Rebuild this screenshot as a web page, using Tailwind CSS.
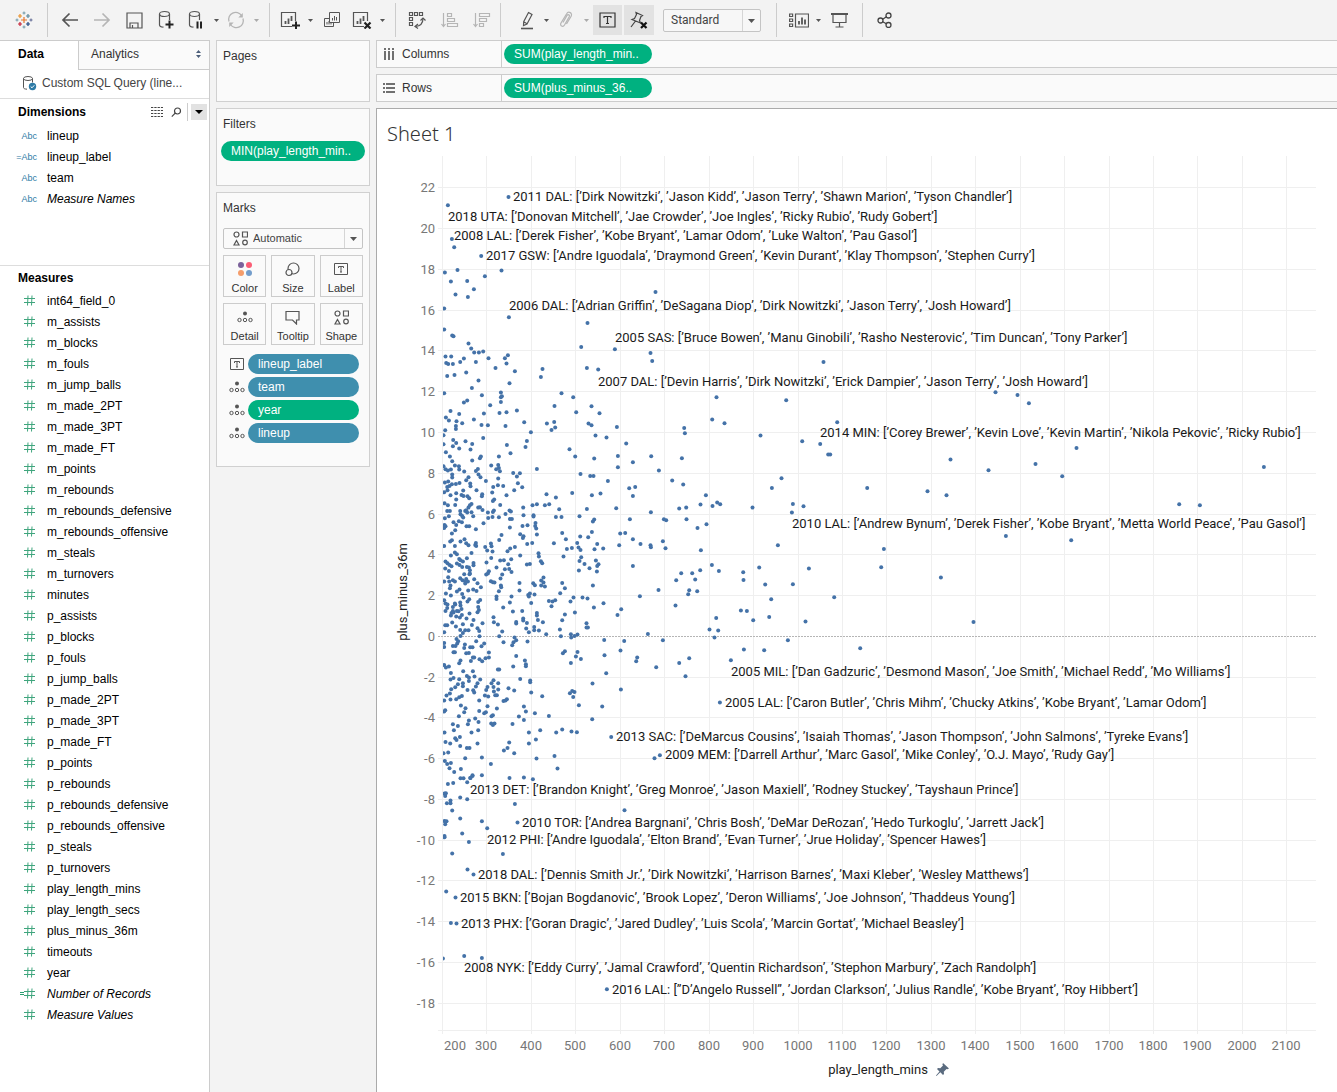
<!DOCTYPE html>
<html lang="en">
<head>
<meta charset="utf-8">
<meta name="viewport" content="width=device-width, initial-scale=1">
<title>Sheet 1</title>
<script src="https://cdn.jsdelivr.net/npm/@tailwindcss/browser@4"></script>
</head>
<body class="flex min-h-screen flex-col overflow-x-hidden bg-[#f3f3f3] font-['Liberation_Sans',Arial,sans-serif] text-xs text-[#333]">

<!-- Toolbar -->
<header class="flex h-10 shrink-0 items-center text-[#555]" role="toolbar" aria-label="Workbook toolbar">
  <button aria-label="Tableau" class="flex w-[47px] items-center justify-center">
    <svg width="18" height="18" viewBox="0 0 18 18" fill="none" stroke-width="1.2">
      <path stroke="#e8762c" d="M9 6v6M6 9h6"/><path stroke="#eb9129" d="M5 3v4M3 5h4"/><path stroke="#59879b" d="M13 3v4M11 5h4"/><path stroke="#c72035" d="M5 11v4M3 13h4"/><path stroke="#1f457e" d="M13 11v4M11 13h4"/>
      <path stroke="#7199a6" stroke-width="1" d="M9 .5v3M7.500 2h3M2 7.500v3M.5 9h3M9 14.500v3M7.500 16h3"/><path stroke="#5b6591" stroke-width="1" d="M16 7.500v3M14.500 9h3"/>
    </svg>
  </button>
  <span class="h-[34px] w-px bg-[#ccc]"></span>
  <button aria-label="Undo" class="ml-1.5 flex w-8 justify-center"><svg width="18" height="16" fill="none" stroke="#555" stroke-width="1.700"><path d="M17 8H2M8.500 1.500 2 8l6.500 6.500"/></svg></button>
  <button aria-label="Redo" class="flex w-8 justify-center"><svg width="18" height="16" fill="none" stroke="#b5b5b5" stroke-width="1.700"><path d="M1 8h15M9.500 1.500 16 8l-6.500 6.500"/></svg></button>
  <button aria-label="Save" class="flex w-8 justify-center"><svg width="17" height="17" fill="none" stroke="#555" stroke-width="1.2"><path d="M1 1h15v15H1zM4 16v-5h8v5M6.500 16v-3"/></svg></button>
  <button aria-label="New data source" class="flex w-8 justify-center"><svg width="18" height="20" fill="none" stroke="#555" stroke-width="1.2"><ellipse cx="7.500" cy="4" rx="5" ry="2.500"/><path d="M2.500 4v11c0 1.200 1.500 2 4 2.200M12.500 4v6"/><path stroke="#222" stroke-width="2" d="M12.500 10.500v8M8.500 14.500h8"/></svg></button>
  <button aria-label="Pause auto updates" class="flex w-7 justify-center"><svg width="16" height="20" fill="none" stroke="#555" stroke-width="1.2"><ellipse cx="6.500" cy="4" rx="5" ry="2.500"/><path d="M1.500 4v11c0 1.200 1.500 2 4 2.200M11.500 4v6"/><path stroke="#222" stroke-width="2" d="M9.500 11.500v7M13 11.500v7"/></svg></button>
  <button aria-label="Auto update options" class="flex w-3 justify-center"><svg width="5" height="3"><path fill="#555" d="M0 0h5L2.500 3z"/></svg></button>
  <button aria-label="Refresh" class="flex w-7 justify-center"><svg width="18" height="18" fill="none" stroke="#b5b5b5" stroke-width="1.300"><path d="M2 10.500A7 7 0 0 1 14.500 4.500M16 7.500A7 7 0 0 1 3.500 13.500"/><path fill="#b5b5b5" stroke="none" d="M15.800 2v4.500h-4.500zM2.200 16v-4.500h4.500z"/></svg></button>
  <button aria-label="Refresh options" class="flex w-3 justify-center"><svg width="5" height="3"><path fill="#aaa" d="M0 0h5L2.500 3z"/></svg></button>
  <span class="ml-[7px] h-[34px] w-px bg-[#ccc]"></span>
  <button aria-label="New worksheet" class="ml-1.5 flex w-7 justify-center"><svg width="20" height="18" fill="none" stroke="#555" stroke-width="1.200"><path d="M12 15.500H1.500V1.500h14V10"/><path stroke-width="1.800" d="M5.500 13v-3M8.500 13V7.500M11.500 10V5"/><path stroke="#222" stroke-width="2" d="M16 10.500v8M12 14.500h8"/></svg></button>
  <button aria-label="New worksheet options" class="flex w-3 justify-center"><svg width="5" height="3"><path fill="#555" d="M0 0h5L2.500 3z"/></svg></button>
  <button aria-label="Duplicate" class="flex w-8 justify-center"><svg width="18" height="18" fill="none" stroke="#555"><path d="M6.500 1.500h10v10h-10zM6.500 7.500h-5v8h9v-4"/><path d="M9.500 9.500V7M11.500 9.500V5M13.500 9.500V6M4 13.500V11M6 13.500V10M8 13.500V12"/></svg></button>
  <button aria-label="Clear sheet" class="flex w-7 justify-center"><svg width="20" height="18" fill="none" stroke="#555" stroke-width="1.200"><path d="M12 15.500H1.500V1.500h14V10"/><path stroke-width="1.800" d="M5.500 13v-3M8.500 13V7.500M11.500 10V5"/><path stroke="#222" stroke-width="2.200" d="m12.500 11.500 6 6M18.500 11.500l-6 6"/></svg></button>
  <button aria-label="Clear options" class="flex w-3 justify-center"><svg width="5" height="3"><path fill="#555" d="M0 0h5L2.500 3z"/></svg></button>
  <span class="ml-[7px] h-[34px] w-px bg-[#ccc]"></span>
  <button aria-label="Swap rows and columns" class="ml-1 flex w-[34px] justify-center"><svg width="18" height="18" fill="none" stroke="#555" stroke-width="1.200"><path d="M1.500 1.500h3v3h-3zM6.500 1.500h3v3h-3zM11.500 1.500h3v3h-3zM1.500 6.500h3v3h-3zM1.500 11.500h3v3h-3zM15 7.500c0 5-2.500 7.500-7.500 8"/><path d="M12.500 9.500 15 7l2.500 2.500M10 13l-3 2.500 3 2"/></svg></button>
  <button aria-label="Sort ascending" class="flex w-8 justify-center"><svg width="18" height="17" fill="none" stroke="#b5b5b5" stroke-width="1.200"><path d="M2.500 1v13M.5 12l2 2.500 2-2.500M6.500 1.500h4v3h-4zM6.500 6.500h7v3h-7zM6.500 11.500h10v3h-10z"/></svg></button>
  <button aria-label="Sort descending" class="flex w-8 justify-center"><svg width="18" height="17" fill="none" stroke="#b5b5b5" stroke-width="1.200"><path d="M2.500 1v13M.5 12l2 2.500 2-2.500M6.500 1.500h10v3h-10zM6.500 6.500h7v3h-7zM6.500 11.500h4v3h-4z"/></svg></button>
  <span class="ml-0.5 h-[34px] w-px bg-[#ccc]"></span>
  <button aria-label="Highlight" class="ml-[13px] flex w-[26px] justify-center"><svg width="14" height="19" fill="none" stroke="#555" stroke-width="1.200"><path d="m8.500 1.500 3.500 2-5 9.500-3.500 1.500.2-3.800zM3.700 10.700l3.300 2"/><path stroke-width="1.600" d="M1 17.500h12"/></svg></button>
  <button aria-label="Highlight options" class="flex w-3 justify-center"><svg width="5" height="3"><path fill="#555" d="M0 0h5L2.500 3z"/></svg></button>
  <button aria-label="Group" class="flex w-7 justify-center"><svg width="14" height="18" fill="none" stroke="#b5b5b5" stroke-width="1.200"><path d="m4 11.500 4-7c1-1.500 3-.5 2.200 1.200l-4.700 8.300c-1.500 2.500-5 .8-3.500-2L7.500 3c2-3.500 6.500-1 4.500 2.500L7.500 13"/></svg></button>
  <button aria-label="Group options" class="flex w-3 justify-center"><svg width="5" height="3"><path fill="#aaa" d="M0 0h5L2.500 3z"/></svg></button>
  <button aria-label="Show mark labels" aria-pressed="true" class="ml-px flex h-[30px] w-[29px] items-center justify-center bg-[#e2e2e2]"><svg width="17" height="16" fill="none" stroke="#333" stroke-width="1.200"><path d="M1 1h15v14H1z"/><path d="M5 6V4.500h7V6M8.500 4.500v7M7 11.500h3"/></svg></button>
  <button aria-label="Fix axes" aria-pressed="true" class="ml-0.5 flex h-[30px] w-[30px] items-center justify-center bg-[#e2e2e2]"><svg width="20" height="18" fill="none" stroke="#444" stroke-width="1.200"><path d="m7 1.500 6.500 3-1.500 1-1.500 4 1 2.500L3 8.500l2.500-1L7.500 3.500zM6.500 10l-4.500 6"/><path stroke="#111" stroke-width="2.200" d="m12 11.500 5.500 5.500M17.500 11.500 12 17"/></svg></button>
  <span class="relative ml-[9px] w-[98px]">
    <select aria-label="Fit" class="h-[23px] w-full appearance-none rounded-xs border border-[#c4c4c4] bg-[#f7f7f7] pl-[7px] font-['Roboto',sans-serif] text-xs text-[#444]"><option>Standard</option></select>
    <svg class="pointer-events-none absolute top-px right-px" width="18" height="21"><path stroke="#d5d5d5" d="M.5 0v21"/><path fill="#555" d="M6 9h7l-3.500 4z"/></svg>
  </span>
  <span class="ml-[15px] h-[34px] w-px bg-[#ccc]"></span>
  <button aria-label="Show cards" class="ml-[9px] flex w-[26px] justify-center"><svg width="20" height="15" fill="none" stroke="#555" stroke-width="1.200"><path d="M.6 1h3v2.500h-3zM.6 6h3v2.500h-3zM.6 11h3v2.500h-3zM6.500 1h13v13h-13z"/><path stroke-width="1.800" d="M10 11.500V8M13 11.500v-7M16 11.500v-5"/></svg></button>
  <button aria-label="Card options" class="flex w-3 justify-center"><svg width="5" height="3"><path fill="#555" d="M0 0h5L2.500 3z"/></svg></button>
  <button aria-label="Presentation mode" class="flex w-[30px] justify-center"><svg width="17" height="16" fill="none" stroke="#555" stroke-width="1.200"><path stroke-width="2" d="M0 2h17"/><path d="M2 2v8.500h13V2M8.500 10.500v4M4.500 15h8"/></svg></button>
  <span class="ml-2 h-[34px] w-px bg-[#ccc]"></span>
  <button aria-label="Share" class="ml-1.5 flex w-8 justify-center"><svg width="16" height="16" fill="none" stroke="#444" stroke-width="1.300"><circle cx="3.500" cy="8.500" r="2.500"/><circle cx="11.500" cy="3.500" r="2.500"/><circle cx="11.500" cy="13" r="2.500"/><path d="m5.700 7.200 3.700-2.400M5.700 9.800l3.700 2"/></svg></button>
</header>

<main class="flex flex-1 items-stretch">

  <!-- Data pane -->
  <aside class="w-[210px] shrink-0 border-r border-[#ccc] bg-white text-black">
    <div class="flex h-[30px]" role="tablist">
      <button role="tab" aria-selected="true" class="w-[78px] border-t border-[#ccc] pb-1 pl-[18px] text-left font-bold">Data</button>
      <button role="tab" class="flex flex-1 items-center justify-between border-t border-b border-l border-[#ccc] bg-[#fafafa] pr-2 pb-0.5 pl-3 text-[#333]">Analytics
        <svg width="5" height="8" fill="#4c5f7a"><path d="M0 3h5L2.500 0zM0 5h5L2.500 8z"/></svg></button>
    </div>
    <a href="#" class="flex h-[29px] items-center gap-[5px] border-b border-[#ddd] pb-0.5 pl-[22px] text-[#444]">
      <svg width="15" height="16" fill="none" stroke="#555"><ellipse cx="6" cy="3.500" rx="4.500" ry="2"/><path d="M1.500 3.500v9c0 1 1 1.500 3.500 1.700M10.500 3.500v4"/><circle cx="10.500" cy="11.500" r="3.700" fill="#2e7ba6" stroke="none"/><path stroke="#fff" d="m8.700 11.500 1.300 1.300 2.300-2.500"/></svg>
      Custom SQL Query (line...
    </a>
    <section class="h-[167px] border-b border-[#ddd]">
      <div class="flex h-[26px] items-center pr-0.5 pl-[18px]">
        <h2 class="flex-1 font-bold">Dimensions</h2>
        <button aria-label="View data"><svg width="12" height="10" stroke="#444" fill="none" stroke-dasharray="2.300 1"><path d="M0 .5h12M0 3.500h12M0 6.500h12M0 9.500h12"/></svg></button>
        <button aria-label="Find field" class="ml-2"><svg width="11" height="11" fill="none" stroke="#444" stroke-width="1.200"><circle cx="6.500" cy="4" r="3"/><path d="M4.200 6.200.8 9.600"/></svg></button>
        <span class="ml-[5px] h-[18px] w-px bg-[#ccc]"></span>
        <button aria-label="Dimension menu" class="ml-[3px] flex h-4 w-4 items-center justify-center bg-[#e2e2e2]"><svg width="8" height="4"><path d="M0 0h8L4 4z"/></svg></button>
      </div>
      <ul id="dimensions"></ul>
    </section>
    <section>
      <h2 class="flex h-6 items-center pl-[18px] font-bold">Measures</h2>
      <ul id="measures"></ul>
    </section>
  </aside>

  <!-- Cards -->
  <div class="ml-1.5 flex w-[154px] shrink-0 flex-col gap-1.5">
    <section class="h-[62px] border border-[#d0d0d0] bg-[#fafafa] px-1.5 pt-[7px]"><h2>Pages</h2></section>
    <section class="h-[78px] border border-[#d0d0d0] bg-[#fafafa] px-1 pt-[7px]"><h2 class="px-0.5">Filters</h2>
      <button class="mt-[9px] h-5 w-36 rounded-full bg-[#00b180] pl-[10px] text-left text-white">MIN(play_length_min..</button>
    </section>
    <section class="h-[275px] border border-[#d0d0d0] bg-[#fafafa] px-1.5 pt-[7px]"><h2>Marks</h2>
      <div class="relative mt-3 w-[140px]">
        <select aria-label="Mark type" class="h-[21px] w-full appearance-none rounded-xs border border-[#c4c4c4] bg-[#fafafa] pl-[29px] text-[11px] text-[#444]"><option>Automatic</option></select>
        <svg class="pointer-events-none absolute top-[3px] left-[10px]" width="15" height="15" fill="none" stroke="#555" stroke-width="1.200"><circle cx="3.500" cy="3.500" r="2.500"/><path d="M9.500 1h5v5h-5zM3.500 9.500 6 14H1z"/><circle cx="12" cy="11.500" r="2.300"/></svg>
        <svg class="pointer-events-none absolute top-px right-px" width="18" height="19"><path stroke="#d5d5d5" d="M.5 0v19"/><path fill="#555" d="M6 8h7l-3.500 4z"/></svg>
      </div>
      <div id="encodings" class="mt-1.5 grid w-[140px] grid-cols-3 gap-x-[5px] gap-y-1.5 text-[11px]"></div>
      <ul id="marks" class="mt-[9px] flex flex-col gap-[3px]"></ul>
    </section>
  </div>

  <!-- Shelves and view -->
  <div class="ml-1.5 flex min-w-0 flex-1 flex-col gap-1.5">
    <div class="flex h-7 items-center border border-r-0 border-[#ccc] bg-[#fafafa]">
      <h2 class="flex h-full w-[125px] items-center gap-2 border-r border-[#ccc] pl-1.5"><svg width="11" height="12" fill="none" stroke="#444" stroke-width="1.500"><path stroke-dasharray="2 1 12" d="M2 0v12M6 0v12M10 0v12"/></svg>Columns</h2>
      <button class="ml-[2px] h-5 w-[148px] rounded-full bg-[#00b180] pl-[10px] text-left text-white">SUM(play_length_min..</button>
    </div>
    <div class="flex h-7 items-center border border-r-0 border-[#ccc] bg-[#fafafa]">
      <h2 class="flex h-full w-[125px] items-center gap-[7px] border-r border-[#ccc] pl-1.5"><svg width="12" height="11" fill="none" stroke="#444" stroke-width="1.500"><path stroke-dasharray="2 1 12" d="M0 1h12M0 5h12M0 9h12"/></svg>Rows</h2>
      <button class="ml-[2px] h-5 w-[148px] rounded-full bg-[#00b180] pl-[10px] text-left text-white">SUM(plus_minus_36..</button>
    </div>
    <section class="flex-1 overflow-hidden border-t border-l border-[#aaa] bg-white">
      <h1 class="h-[47px] pt-[11px] pl-2.5 font-['Noto_Sans',sans-serif] text-xl font-light text-[#333]">Sheet 1</h1>
      <svg id="chart" role="img" aria-label="plus_minus_36m against play_length_mins by lineup" width="960" height="936" viewBox="377 156 960 936" class="font-['Roboto',sans-serif] text-[13px]"></svg>
    </section>
  </div>
</main>

<script>
const el = id => document.getElementById(id);

// Data pane fields
const row = (icon, name, italic) => `<li class="flex h-[21px] items-center"><span class="flex w-[47px] justify-end pr-[10px] text-[9px] text-[#2e7ba6]">${icon}</span><span class="${italic ? 'italic' : ''}">${name}</span></li>`;
const hash = calc => `<span class="flex items-center pr-[2px]">${calc ? '<svg width="4" height="5" stroke="#2a9d6f"><path d="M0 1.500h4M0 3.500h4"/></svg>' : ''}<svg width="11" height="11" fill="none" stroke="#3fa57d"><path d="M4 .5 3.500 10.500M8 .5 7.500 10.500M0 3.500h11M0 7.500h11"/></svg></span>`;
el('dimensions').innerHTML = [['Abc', 'lineup'], ['=Abc', 'lineup_label'], ['Abc', 'team'], ['Abc', 'Measure Names', 1]].map(f => row(...f)).join('');
el('measures').innerHTML = `int64_field_0 m_assists m_blocks m_fouls m_jump_balls m_made_2PT m_made_3PT m_made_FT m_points m_rebounds m_rebounds_defensive m_rebounds_offensive m_steals m_turnovers minutes p_assists p_blocks p_fouls p_jump_balls p_made_2PT p_made_3PT p_made_FT p_points p_rebounds p_rebounds_defensive p_rebounds_offensive p_steals p_turnovers play_length_mins play_length_secs plus_minus_36m timeouts year`
  .split(' ').map(n => row(hash(), n)).join('') + row(hash(1), 'Number of Records', 1) + row(hash(), 'Measure Values', 1);

// Marks card
const dots = '<svg width="16" height="12" fill="none" stroke="#555"><circle cx="8" cy="2.500" r="2" fill="#555" stroke="none"/><circle cx="2.500" cy="9" r="1.700"/><circle cx="8" cy="9" r="1.700"/><circle cx="13.500" cy="9" r="1.700"/></svg>';
const box = '<svg width="14" height="13" fill="none" stroke="#555"><path d="M.5.5h13v11H.5zM4.500 5V3.500h5V5M7 3.500v5.500M6 9h2"/></svg>';
const enc = {
  Color: '<svg width="16" height="16"><circle cx="4" cy="4" r="3" fill="#7b629b"/><circle cx="12" cy="4" r="3" fill="#fb5d75"/><circle cx="4" cy="12" r="3" fill="#f59d6b"/><circle cx="12" cy="12" r="3" fill="#739dcb"/></svg>',
  Size: '<svg width="15" height="15" fill="none" stroke="#555" stroke-width="1.200"><circle cx="8.500" cy="6.500" r="5.500"/><circle cx="4" cy="10.500" r="3" fill="#fafafa"/></svg>',
  Label: box, Detail: dots,
  Tooltip: '<svg width="15" height="15" fill="none" stroke="#555" stroke-width="1.200"><path d="M1 1.500h13v8.500h-2.500v4L7.500 10H1z"/></svg>',
  Shape: '<svg width="15" height="15" fill="none" stroke="#555" stroke-width="1.200"><circle cx="3.500" cy="3.500" r="2.500"/><path d="M9.500 1h5v5h-5zM3.500 9.500 6 14H1z"/><circle cx="12" cy="11.500" r="2.300"/></svg>'
};
el('encodings').innerHTML = Object.entries(enc).map(([n, s]) => `<button class="flex h-[42px] flex-col items-center border border-[#ccc] bg-[#fafafa]"><span class="flex h-[26px] items-center justify-center">${s}</span><span class="leading-[12px]">${n}</span></button>`).join('');
el('marks').innerHTML = [[box, 'lineup_label', 'bg-[#3f8fae]'], [dots, 'team', 'bg-[#3f8fae]'], [dots, 'year', 'bg-[#00b180]'], [dots, 'lineup', 'bg-[#3f8fae]']]
  .map(([i, n, c]) => `<li class="flex h-5 items-center"><span class="flex w-[25px] justify-center pl-0.5">${i}</span><button class="h-5 w-[111px] rounded-full pl-[10px] text-left text-white ${c}">${n}</button></li>`).join('');

// Chart: each tile is [x origin, y origin, points in thirds of a pixel]
const tiles = [
[390,150,`355,140 173,165 185,266 192,291 273,317 164,367 202,359 334,361 182,394 231,392 284,378 251,417 196,433 233,440 796,425 162,475 356,501 592,518 162,538 186,556 190,558 235,580 243,595 252,607 266,607 279,604 573,590 674,597 781,608 786,632 166,619 183,619 168,638 174,641 188,641 210,635 221,625 257,635 295,624 316,653 344,624 353,615 349,640 374,663 457,656 452,680 590,653 624,658 171,677 193,674 228,667 265,691 245,713 358,699`],
[390,390,`162,9 275,15 332,7 335,18 332,21 514,9 549,21 231,31 221,37 332,35 300,45 493,47 604,48 181,62 380,61 207,71 281,70 328,68 349,66 558,66 628,69 167,82 176,91 199,93 216,99 251,88 274,104 293,105 346,107 402,96 470,100 492,95 495,112 484,119 595,100 604,105 680,110 165,120 197,107 197,116 422,126 160,135 616,136 649,142 279,143 189,149 198,158 226,153 246,161 160,162 188,168 207,175 241,178 350,164 410,152 406,170 361,189 708,160 538,177 555,199 612,205 167,186 179,199 186,213 246,211 272,199 269,204 326,199 324,224 303,226 683,197 683,231 728,216 160,228 166,237 173,241 182,238 194,226 206,228 207,238 222,244 186,253 186,262 257,242 263,236 265,253 271,261 318,237 326,233 329,243 324,265 287,272 440,236 369,248 389,249 380,259 383,279 396,291 372,300 571,251 600,257 610,257 653,272 717,294 735,290 728,317 164,277 174,274 171,290 178,287 185,282 197,281 208,278 228,270 235,261 240,280 241,288 172,300 162,306 309,290 323,285 339,287 306,307 349,315 259,300 219,301 198,309 181,315 214,314 220,317 232,318 237,324 276,312 275,318 312,328 308,332 198,328 469,312 546,308 497,322 605,315 631,310 163,339 173,345 195,344 235,352 244,341 239,345 330,344 264,352 269,351 277,359 399,352 427,345 440,342 464,345 477,342 507,357 590,356 678,354 171,362 179,362 210,362 211,372 216,377 225,362 231,367 244,366 228,360 293,367 308,365 311,361 346,371 358,361 362,364 294,383 307,380 326,381 249,378 164,384 176,378 219,382 359,386 365,386 400,375 430,375 430,379 497,380 514,380 568,378 612,388 608,394 719,387 190,396 206,393 215,396 198,404 280,399 163,404 166,408 162,413 229,408 237,408 257,417 195,420 359,412 397,407 412,405 436,398 435,407 438,415 185,430 334,434 390,432 400,438 398,443 440,433 516,428 605,425 690,430 705,428 570,439 594,441 728,447 527,447 327,449 687,465 223,447 185,450 180,454 211,454 228,459 235,465 257,458 255,464 258,467 302,460 304,468 411,461 426,458 491,459 561,458 621,461 565,472 571,479 545,473 530,476 613,477 639,475 162,467 194,467 285,470 291,481 307,484 360,475 374,470 352,483 244,488 194,487 200,492 182,496 390,496 445,489 446,499 520,499 573,501 568,512 583,521 598,534 617,511 625,522 621,527 620,544 566,541 728,527 230,504 207,506 211,510 218,514 303,503 289,517 330,511 341,510 363,507 354,522 452,513 456,519 410,523 419,521 166,514 172,519 178,524 184,528 200,520 208,524 216,530 230,530 236,532 250,518 250,525 165,535 176,542 239,540 239,550 319,532 344,537 357,536 364,545 336,553 296,543 293,550 288,553 222,552 238,552 174,561 210,564 228,566 217,570 225,573 252,567 162,574 177,574 188,570 194,574 233,574 225,580 262,579 331,565 302,573 308,576 313,577 332,586 388,578 429,579 434,585 460,562 453,571 460,577 453,586 464,589 516,578 608,586 524,594 181,586 179,594 272,591 333,591`],
[390,580,`326,33 388,31 208,28 234,31 249,28 259,32 200,34 167,40 216,41 319,49 319,56 364,49 220,52 182,46 510,39 414,44 419,40 433,43 416,49 423,68 162,60 237,57 232,64 270,59 264,65 359,67 194,70 210,67 211,76 166,70 172,73 550,52 541,64 577,52 592,55 640,69 484,78 476,62 487,64 495,60 611,82 693,87 682,104 554,97 339,82 264,80 266,89 262,96 171,83 166,92 188,80 214,86 195,73 188,92 184,98 200,92 205,93 190,97 182,106 238,100 215,104 198,109 209,112 396,92 368,94 440,98 440,106 524,103 310,111 229,115 250,119 399,115 399,121 410,128 443,119 458,126 516,120 378,125 378,130 311,126 323,133 186,127 218,132 245,134 277,129 171,135 165,135 197,139 210,149 589,129 593,142 589,142 225,150 235,150 262,144 267,152 432,140 432,150 408,145 446,151 416,156 336,154 509,148 512,168 468,162 542,162 553,167 543,172 562,163 162,156 218,158 211,167 268,168 327,168 199,176 204,183 201,190 188,197 196,197 224,193 222,203 240,201 247,201 258,183 282,190 274,198 162,188 162,200 373,172 378,180 370,186 366,195 340,186 412,184 642,179 702,182 691,211 190,216 194,216 228,219 236,218 296,217 286,234 296,232 378,227 248,232 252,232 211,241 207,249 242,242 268,237 276,243 404,241 407,252 407,258 518,219 524,213 562,215 557,229 572,236 542,248 643,225 741,232 738,243 162,254 167,262 176,259 369,259 323,268 327,268 219,273 248,273 182,278 648,279 230,287 236,292 253,289 236,302 270,298 181,298 190,293 207,297 390,296 420,301 420,306 310,300 304,309 324,309 262,309 257,319 218,309 218,318 203,312 195,321 183,327 607,310 355,324 372,331 292,320 310,320 288,329 311,334 324,328 232,329 249,330 252,337 423,337 179,340 169,346 456,348 539,339 546,332 553,335 549,350 692,328 284,346 294,349 315,345 320,345 215,347 207,351 198,357 181,358 267,361 162,361 350,357 346,361 340,362 212,376 226,384 292,378 320,385 401,379 566,375 636,379 165,390 162,394 222,396 267,392 282,399 287,396 407,394 434,399 386,409 476,407 206,408 308,405 304,408 255,415 401,419 606,417 236,421 265,425 188,432 233,432 203,437 303,430 313,430 308,434 367,431 450,450 516,448 191,450 264,450 244,457 163,457 416,457 498,457 544,454 560,456 663,470 209,470 195,474 199,479 437,478 166,485 180,490 262,490 357,487 416,490 210,497 230,503 238,503 352,503 341,511 160,519 174,517 372,519 493,527 225,534 275,532 439,535 164,542 182,548 171,551 302,551 178,564 212,566 502,565 192,575 247,585 275,585 211,594 220,594 240,593 358,593 401,592 428,597`],
[390,770,`247,17 241,23 173,41 189,38 231,36 210,82 231,87 167,69 163,70 165,77 181,91 170,99 181,99 186,121 374,101 703,120 210,145 163,152 169,153 165,162 275,153 291,174 382,157 216,190 236,215 163,197 163,201 186,250 338,251 232,298 250,313 168,364 196,382 182,458 199,460 222,557 275,563 158,565 650,657`],
[620,330,`610,95 289,201 498,210 276,268 313,279 192,293 194,309 421,316 651,276 546,333 600,341 624,373 630,373 93,378 185,384 116,421 156,451 189,463 455,473 484,444 741,473 922,483 979,495 991,388 1105,420 1126,186 257,495 241,523 277,527 291,517 300,522 177,535 198,532 92,546 397,532 518,521 550,528 515,547 131,567 138,570 199,567 259,582 232,593 128,633 136,654 61,641 91,645 92,651 242,660 473,645 791,656 783,711 962,742 1157,617 275,704 240,720 296,722 183,729 216,729 168,750 225,748 369,726 370,749 417,712 566,715 115,779 207,780 204,792 231,783 435,763 518,762 59,798 453,807 642,801 166,826 362,841 380,842 399,870 447,860 288,863 556,874 1060,875 268,898 294,901 283,922 83,911 128,930 503,930 720,954 371,958 432,960`],
[1000,330,`52,194 86,219 229,353 106,401 186,438 791,410 537,522 599,525 213,630`],
[600,620,`237,128 267,114 168,141 256,168 392,120 359,247 163,414 179,405`]
];

// Mark labels: x, vertical centre, text
const labels = [
[513,197,"2011 DAL: [’Dirk Nowitzki’, ’Jason Kidd’, ’Jason Terry’, ’Shawn Marion’, ’Tyson Chandler’]"],
[448,217,"2018 UTA: [’Donovan Mitchell’, ’Jae Crowder’, ’Joe Ingles’, ’Ricky Rubio’, ’Rudy Gobert’]"],
[454,236,"2008 LAL: [’Derek Fisher’, ’Kobe Bryant’, ’Lamar Odom’, ’Luke Walton’, ’Pau Gasol’]"],
[486,256,"2017 GSW: [’Andre Iguodala’, ’Draymond Green’, ’Kevin Durant’, ’Klay Thompson’, ’Stephen Curry’]"],
[509,306,"2006 DAL: [’Adrian Griffin’, ’DeSagana Diop’, ’Dirk Nowitzki’, ’Jason Terry’, ’Josh Howard’]"],
[615,338,"2005 SAS: [’Bruce Bowen’, ’Manu Ginobili’, ’Rasho Nesterovic’, ’Tim Duncan’, ’Tony Parker’]"],
[598,382,"2007 DAL: [’Devin Harris’, ’Dirk Nowitzki’, ’Erick Dampier’, ’Jason Terry’, ’Josh Howard’]"],
[820,433,"2014 MIN: [’Corey Brewer’, ’Kevin Love’, ’Kevin Martin’, ’Nikola Pekovic’, ’Ricky Rubio’]"],
[792,524,"2010 LAL: [’Andrew Bynum’, ’Derek Fisher’, ’Kobe Bryant’, ’Metta World Peace’, ’Pau Gasol’]"],
[731,672,"2005 MIL: [’Dan Gadzuric’, ’Desmond Mason’, ’Joe Smith’, ’Michael Redd’, ’Mo Williams’]"],
[725,703,"2005 LAL: [’Caron Butler’, ’Chris Mihm’, ’Chucky Atkins’, ’Kobe Bryant’, ’Lamar Odom’]"],
[616,737,"2013 SAC: [’DeMarcus Cousins’, ’Isaiah Thomas’, ’Jason Thompson’, ’John Salmons’, ’Tyreke Evans’]"],
[665,755,"2009 MEM: [’Darrell Arthur’, ’Marc Gasol’, ’Mike Conley’, ’O.J. Mayo’, ’Rudy Gay’]"],
[470,790,"2013 DET: [’Brandon Knight’, ’Greg Monroe’, ’Jason Maxiell’, ’Rodney Stuckey’, ’Tayshaun Prince’]"],
[522,823,"2010 TOR: [’Andrea Bargnani’, ’Chris Bosh’, ’DeMar DeRozan’, ’Hedo Turkoglu’, ’Jarrett Jack’]"],
[487,840,"2012 PHI: [’Andre Iguodala’, ’Elton Brand’, ’Evan Turner’, ’Jrue Holiday’, ’Spencer Hawes’]"],
[478,875,"2018 DAL: [’Dennis Smith Jr.’, ’Dirk Nowitzki’, ’Harrison Barnes’, ’Maxi Kleber’, ’Wesley Matthews’]"],
[460,898,"2015 BKN: [’Bojan Bogdanovic’, ’Brook Lopez’, ’Deron Williams’, ’Joe Johnson’, ’Thaddeus Young’]"],
[461,924,"2013 PHX: [’Goran Dragic’, ’Jared Dudley’, ’Luis Scola’, ’Marcin Gortat’, ’Michael Beasley’]"],
[464,968,"2008 NYK: [’Eddy Curry’, ’Jamal Crawford’, ’Quentin Richardson’, ’Stephon Marbury’, ’Zach Randolph’]"],
[612,990,"2016 LAL: [”D’Angelo Russell”, ’Jordan Clarkson’, ’Julius Randle’, ’Kobe Bryant’, ’Roy Hibbert’]"]
];

let s = '<clipPath id="plot"><path d="M443 150H1320V1032H443z"/></clipPath>';
let grid = 'M442.5 156V1034M438 1030.5H1316';
for (let x = 300; x <= 2100; x += 100) {
  const px = Math.ceil(486 + (x - 300) * 0.4443);
  grid += `M${px + 0.5} 156V1034`;
  s += `<text x="${px}" y="1050" text-anchor="middle" fill="#777">${x}</text>`;
}
s += '<text x="455" y="1050" text-anchor="middle" fill="#777">200</text>';
for (let y = -18; y <= 22; y += 2) {
  const py = Math.floor(636.3 - y * 20.38);
  if (y) grid += `M438 ${py + 0.5}H1316`;
  s += `<text x="435" y="${py + 5}" text-anchor="end" fill="#777">${y}</text>`;
}
s += `<path d="${grid}" stroke="#efefef" fill="none"/><path d="M438 636.5H1316" stroke="#b5b5b5" stroke-dasharray="2 1"/>`;
s += '<g clip-path="url(#plot)" fill="#4472a8">' + tiles.map(([ox, oy, pts]) => pts.split(' ').map(p => { const [x, y] = p.split(','); return `<circle cx="${(ox + x / 3 + 0.2).toFixed(1)}" cy="${(oy + y / 3 + 0.2).toFixed(1)}" r="2"/>`; }).join('')).join('') + '</g>';
s += '<g fill="#1a1a1a">' + labels.map(([x, y, t]) => `<text x="${x}" y="${y + 4}">${t}</text>`).join('') + '</g>';
s += '<text transform="translate(407 592) rotate(-90)" text-anchor="middle" fill="#222">plus_minus_36m</text><text x="878" y="1074" text-anchor="middle" fill="#222">play_length_mins</text>';
s += '<path transform="translate(936 1063)" fill="#5a6b7f" d="M7 0l6 5.500-1.500.8-1-.3-2.700 2.700.2 2.300-1 1-2.700-2.700L.5 13l-.5-.5 3.500-4L1 6l1-1 2.300.2L7 2.500l-.6-1z"/>';
el('chart').innerHTML = s;
</script>
</body>
</html>
